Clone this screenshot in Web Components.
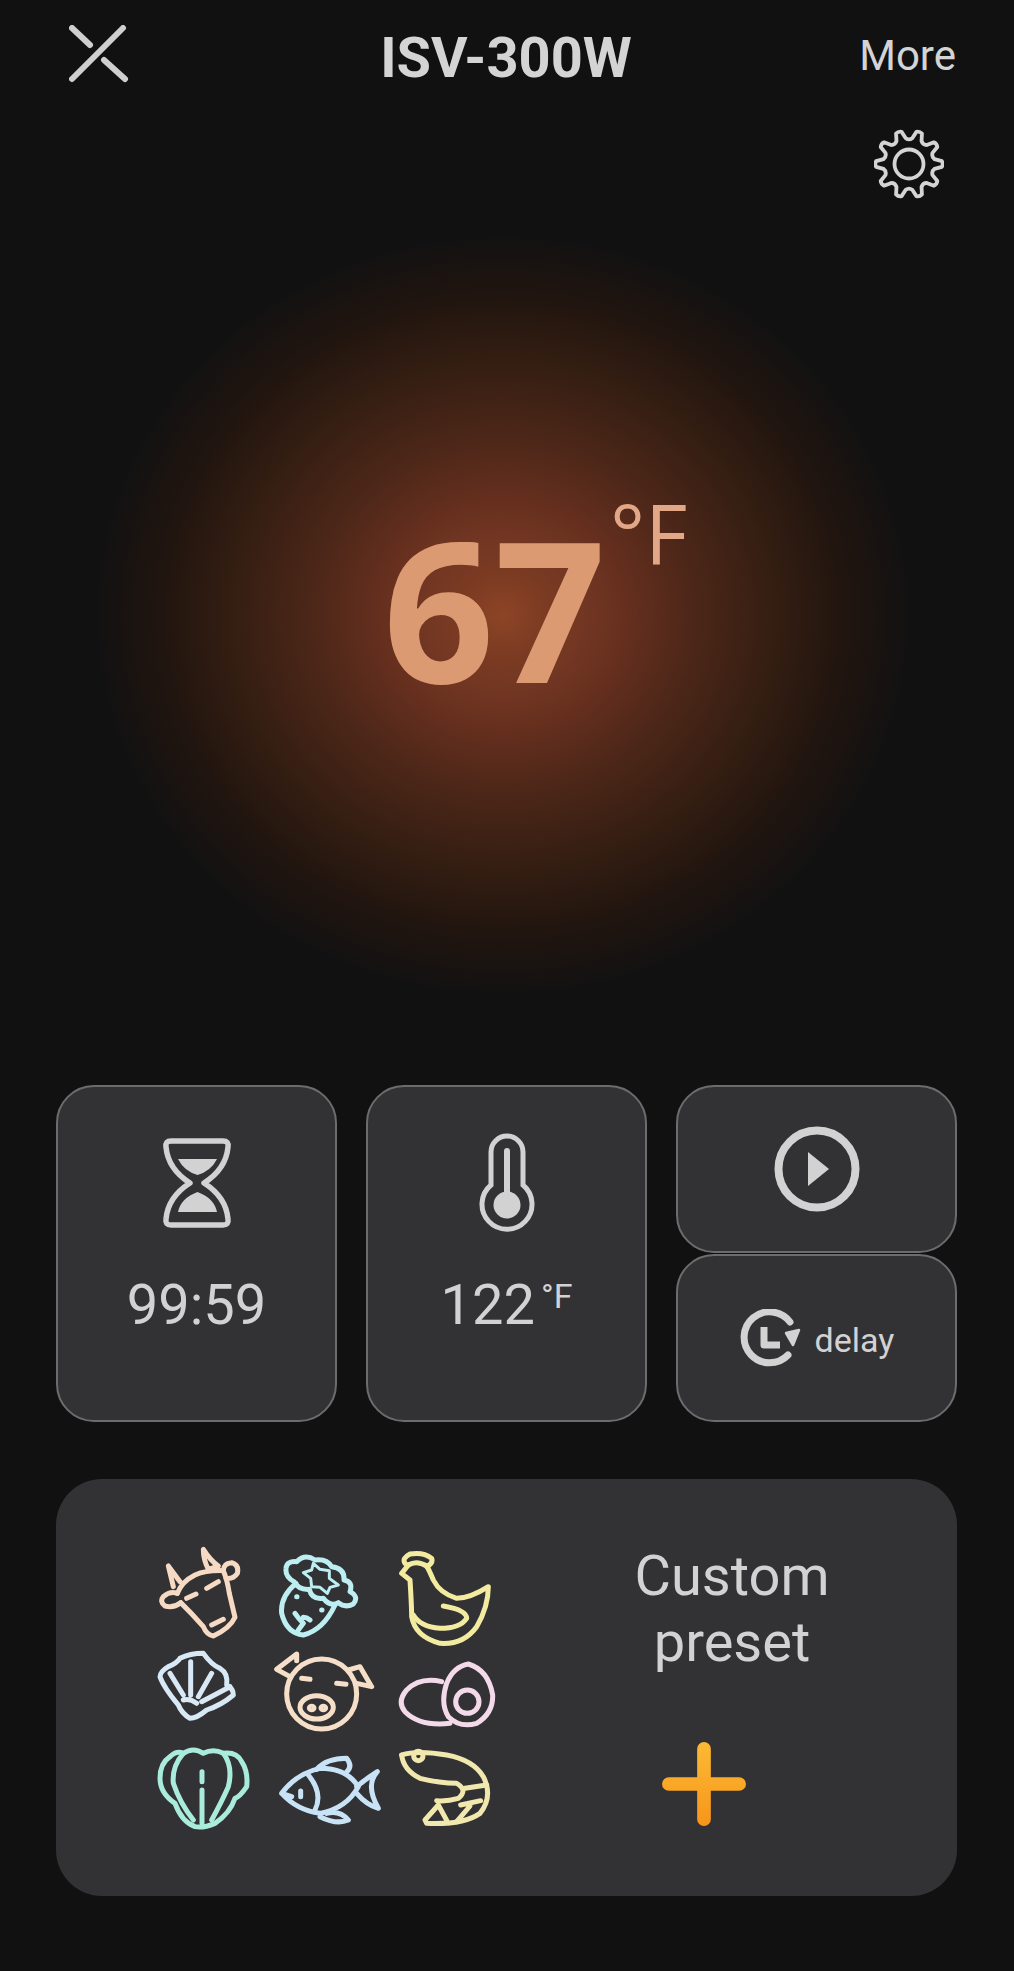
<!DOCTYPE html>
<html lang="en">
<head>
<meta charset="utf-8">
<title>ISV-300W</title>
<style>
  html, body { margin: 0; background: #111112; }
  body { width: 1014px; height: 1971px; overflow: hidden; font-family: Roboto, "Liberation Sans", sans-serif; color: #d2d2d2; }
</style>
</head>
<body>
<sv-app>
  <sv-header slot="header" title-text="ISV-300W" action="More"></sv-header>
  <sv-dial slot="dial" value="67" unit="°F"></sv-dial>
  <sv-controls slot="controls">
    <sv-card class="tall" label="99:59" icon="hourglass"></sv-card>
    <sv-card class="tall" label="122" unit="°F" icon="thermometer"></sv-card>
    <sv-card icon="play"></sv-card>
    <sv-card class="inline" label="delay" icon="delay"></sv-card>
  </sv-controls>
  <sv-presets slot="presets">
    <sv-food name="cow"></sv-food>
    <sv-food name="veg"></sv-food>
    <sv-food name="chicken"></sv-food>
    <sv-food name="shell"></sv-food>
    <sv-food name="pig"></sv-food>
    <sv-food name="egg"></sv-food>
    <sv-food name="cabbage"></sv-food>
    <sv-food name="fish"></sv-food>
    <sv-food name="shrimp"></sv-food>
    <span slot="label">Custom<br>preset</span>
  </sv-presets>
</sv-app>

<script>
/** Icons of the control cards, each one keeps the pixel size it has on the device */
const CARD_ICONS = Object.freeze({
  hourglass: `<svg width="72" height="100" viewBox="0 -5 72 100" fill="none" stroke="currentColor" stroke-width="5.5" stroke-linejoin="round">
      <path d="M10 3H62Q68 3 67 9Q65 31 43 45Q65 59 67 81Q68 87 62 87H10Q4 87 5 81Q7 59 29 45Q7 31 5 9Q4 3 10 3Z"/>
      <path d="M17 21H56Q50 33 36.500 37Q23 33 17 21Z" fill="currentColor" stroke="none"/>
      <path d="M36.500 54Q53 60 56 74H17Q20 60 36.500 54Z" fill="currentColor" stroke="none"/>
    </svg>`,
  thermometer: `<svg width="56" height="100" viewBox="0 0 56 100" fill="none" stroke="currentColor" stroke-width="5">
      <path d="M12 52V19A16 16 0 0 1 44 19V52A25 25 0 1 1 12 52Z"/>
      <path d="M28 18V62" stroke-width="6" stroke-linecap="round"/>
      <circle cx="28" cy="72" r="13.500" fill="currentColor" stroke="none"/>
    </svg>`,
  play: `<svg width="86" height="86" viewBox="0 0 86 86" fill="none" stroke="currentColor" stroke-width="8">
      <circle cx="43" cy="43" r="38.500"/>
      <path d="M34 26L55 43L34 60Z" fill="currentColor" stroke="none"/>
    </svg>`,
  delay: `<svg width="62" height="58" viewBox="0 0 62 58" fill="none" stroke="currentColor" stroke-width="7" stroke-linecap="round" stroke-linejoin="round">
      <path d="M49 46A25.500 25.500 0 1 1 51 13"/>
      <path d="M25 18V36H41" stroke-linecap="butt"/>
      <path d="M47 24L60 21L54 36Z" fill="currentColor" stroke-width="2.500"/>
    </svg>`
});

/** Food icons, paths are in a 3x grid (360x300 for a 120x100 cell), the viewBox moves them into the cell */
const FOOD_ICONS = Object.freeze({
  cow: { color: '#f6dac3', box: '30 51', body: `
    <path d="M120 155L85 108L100 170M190 58Q190 90 205 118L235 108Q210 90 190 58Z"/>
    <path d="M112 190Q125 155 165 135Q200 120 250 122Q262 150 268 190L285 262Q270 295 220 318Q200 315 190 290Q155 250 122 218"/>
    <path d="M122 218Q100 235 75 228Q58 215 70 200Q90 182 112 190M250 122Q250 100 275 98Q298 105 292 130Q280 148 258 145"/>
    <path d="M140 205L168 192M200 175L235 155M215 285L250 268"/>` },
  veg: { color: '#bdeef1', box: '0 51', body: `
    <path d="M72 155Q45 140 48 115Q50 92 80 95Q105 70 135 90Q170 85 185 110Q225 115 222 150Q250 155 240 185Q268 200 250 222Q225 235 205 218Q180 232 160 205Q125 210 118 178Q85 180 72 155Z"/>
    <path d="M100 128L125 120L130 100L150 118L178 122L178 145L205 165L180 172L172 190L150 172L125 170L122 145Z" stroke-width="9"/>
    <path d="M78 160Q30 200 35 250Q50 310 100 315Q160 300 195 225M75 250Q85 265 100 280L85 300M100 262Q110 262 120 270"/>
    <path d="M80 200h1M155 240h1"/>` },
  chicken: { color: '#f3eca0', box: '360 51', body: `
    <path d="M405 100Q395 85 420 72Q460 65 485 85Q490 100 470 110M415 105Q440 90 470 108"/>
    <path d="M415 105L395 130L420 150Q425 230 425 260Q435 320 510 340Q580 345 620 290Q655 230 655 170Q600 205 560 205Q510 190 490 150Q475 115 470 108"/>
    <path d="M520 228Q590 240 590 265Q570 295 510 295Q450 290 430 255"/>` },
  shell: { color: '#d9e8f5', box: '30 21', body: `
    <path d="M60 110Q60 95 85 80Q110 70 120 55Q150 40 190 40Q215 75 240 85Q265 100 260 135Q280 145 280 165Q245 195 200 210Q170 235 150 235Q125 220 115 195Q70 140 60 110Z"/>
    <path d="M90 100L130 165M152 65V165M215 100L175 170M270 140L185 185M130 180Q150 175 170 190"/>` },
  pig: { color: '#f6dfc8', box: '390 21', body: `
    <circle cx="545" cy="162" r="105"/>
    <path d="M470 62L470 42L410 88L450 110M625 90L660 80L695 140L650 130"/>
    <path d="M485 115L510 118M590 130L618 133"/>
    <ellipse cx="530" cy="202" rx="50" ry="35"/>
    <ellipse cx="515" cy="204" rx="7" ry="5"/><ellipse cx="550" cy="204" rx="7" ry="5"/>` },
  egg: { color: '#f3d9e9', box: '750 21', body: `
    <path d="M905 125Q840 110 800 150Q770 185 795 215Q840 260 930 250"/>
    <path d="M985 72Q940 80 920 130Q900 190 925 230Q960 265 1010 250Q1060 220 1058 165Q1045 90 985 72Z"/>
    <circle cx="982" cy="185" r="35"/>` },
  cabbage: { color: '#a9ecdc', box: '30 51', body: `
    <path d="M130 70Q160 50 190 70Q220 55 250 70Q290 65 305 95Q325 125 320 170Q300 200 285 205Q270 250 225 280Q190 295 165 290Q125 275 105 220Q60 190 60 145Q60 100 90 80Q110 60 130 70Z"/>
    <path d="M130 70Q95 110 100 160Q120 220 160 270M250 70Q280 110 265 170Q245 215 215 270"/>
    <path d="M186 125V155M186 180V280"/>` },
  fish: { color: '#c9e3f6', box: '390 51', body: `
    <path d="M425 190Q470 130 540 115Q620 115 655 170Q620 235 540 250Q470 240 425 190ZM425 190L455 200"/>
    <path d="M650 170Q680 145 712 125Q675 165 715 235Q680 225 650 190"/>
    <path d="M530 118Q560 85 620 85Q640 110 618 128M560 250Q600 240 625 270Q590 285 540 260"/>
    <path d="M505 135Q550 190 525 240M482 183V200"/>` },
  shrimp: { color: '#f1e8ae', box: '750 51', body: `
    <path d="M785 75Q830 60 920 75Q1000 90 1030 140Q1060 200 1020 250Q970 285 860 280L855 270L895 225L925 280"/>
    <path d="M785 75Q790 120 840 145Q900 160 950 160Q985 180 955 205Q920 215 890 212"/>
    <path d="M975 175L1040 165M962 225L1022 212M950 275L990 228"/>
    <circle cx="835" cy="78" r="14"/>` }
});

/** Builds the gear outline, 10 teeth around the centre of a 70x70 box with a gap at the top */
const gearPath = () => {
  const TEETH = 10;
  const step = Math.PI * 2 / TEETH;
  const point = (radius, angle) =>
    `${(35 + radius * Math.cos(angle)).toFixed(2)} ${(35 + radius * Math.sin(angle)).toFixed(2)}`;

  let d = '';
  for (let i = 0; i < TEETH; i++) {
    const angle = i * step - Math.PI / 2 + step / 2;
    d += `${i ? 'Q' : 'M'}${i ? `${point(23.5, angle - step / 2)} ` : ''}${point(26, angle - step * 0.3)}`;
    d += `L${point(33, angle - step * 0.14)}`;
    d += `Q${point(34.5, angle)} ${point(33, angle + step * 0.14)}`;
    d += `L${point(26, angle + step * 0.3)}`;
  }
  return `${d}Q${point(23.5, -Math.PI / 2)} ${point(26, -Math.PI / 2 + step * 0.2)}Z`;
};

/** Base for all elements here, only attaches the shadow root and fills it in */
class ShadowElement extends HTMLElement {
  connectedCallback() {
    if (this.shadowRoot) return;
    this.attachShadow({mode: 'open'}).innerHTML = this.markup();
  }
}

class SvApp extends ShadowElement {
  markup() {
    return `
      <style>
        :host { display: flex; flex-direction: column; width: 1014px; }
      </style>
      <slot name="header"></slot>
      <slot name="dial"></slot>
      <slot name="controls"></slot>
      <slot name="presets"></slot>
    `;
  }
}

class SvHeader extends ShadowElement {
  markup() {
    return `
      <style>
        :host { display: block; height: 200px; padding: 0 58px 0 56px; }
        .row { display: grid; grid-template-columns: 1fr auto 1fr; align-items: start; padding-top: 25px; }
        .close { margin-left: 13px; display: block; }
        h1 { margin: 3px 0 -3px; font: 700 56px/60px Roboto, sans-serif; color: #d4d4d4; }
        .more { justify-self: end; font: 400 42px/60px Roboto, sans-serif; color: #d4d4d4; margin-top: 1px; }
        .gear { display: flex; justify-content: flex-end; padding: 43px 12px 0 0; }
      </style>
      <div class="row">
        <svg class="close" width="60" height="58" viewBox="0 0 60 58" fill="none" stroke="#cfcfcf" stroke-width="6" stroke-linecap="round">
          <path d="M54 3L3 54M3 3L21 20M35 35L56 54"/>
        </svg>
        <h1>${this.getAttribute('title-text')}</h1>
        <span class="more">${this.getAttribute('action')}</span>
      </div>
      <div class="gear">
        <svg width="70" height="70" viewBox="0 0 70 70" fill="none" stroke="#d4d4d4" stroke-width="3.800" stroke-linejoin="round">
          <path d="${gearPath()}"/>
          <circle cx="35" cy="35" r="14.500"/>
        </svg>
      </div>
    `;
  }
}

class SvDial extends ShadowElement {
  markup() {
    return `
      <style>
        :host {
          display: flex; justify-content: flex-start; align-items: flex-start;
          height: 885px; box-sizing: border-box; padding: 288px 0 0 383px;
          background: radial-gradient(ellipse 420px 392px at 503px 415px,
            #8d4426 0%, #7c3b22 10%, #6f3522 22%, #662f1e 29%, #4a2618 47%, #351e12 64%, #21150f 81%, #111112 98%);
          color: #dc9a73;
        }
        .value { font: 700 195px/240px "Open Sans", sans-serif; }
        .unit { font: 400 82px/100px "Open Sans", sans-serif; color: #e2a786; margin: -6px 0 0 4px; }
      </style>
      <span class="value">${this.getAttribute('value')}</span>
      <span class="unit">${this.getAttribute('unit')}</span>
    `;
  }
}

class SvControls extends ShadowElement {
  markup() {
    return `
      <style>
        :host {
          display: grid; grid-template-columns: repeat(3, 281px); grid-template-rows: 168px 168px;
          grid-auto-flow: column dense; column-gap: 29px; row-gap: 1px;
          padding: 0 57px 0 56px; height: 337px;
        }
        ::slotted(.tall) { grid-row: span 2; }
      </style>
      <slot></slot>
    `;
  }
}

class SvCard extends ShadowElement {
  markup() {
    const label = this.getAttribute('label');
    const unit = this.getAttribute('unit');
    const isInline = this.classList.contains('inline');
    const isTall = this.classList.contains('tall');

    return `
      <style>
        :host {
          display: flex; box-sizing: border-box; background: #323235;
          border: 2px solid #6c6c6e; border-radius: 38px; color: #d2d2d2;
          flex-direction: ${isInline ? 'row' : 'column'};
          align-items: center; justify-content: ${isTall ? 'flex-start' : 'center'};
          padding-top: ${isTall ? '46px' : '0'};
        }
        svg { display: block; flex: none; }
        .label { font: 400 56px/64px Roboto, sans-serif; display: flex; align-items: flex-start; margin-top: 40px; }
        .inline { font-size: 34px; line-height: 40px; margin: 3px 0 0 14px; }
        sup { font: 400 34px/40px Roboto, sans-serif; margin: 3px 0 0 6px; }
      </style>
      ${CARD_ICONS[this.getAttribute('icon')]}
      ${label ? `<span class="label ${isInline ? 'inline' : ''}">${label}${unit ? `<sup>${unit}</sup>` : ''}</span>` : ''}
    `;
  }
}

class SvPresets extends ShadowElement {
  markup() {
    return `
      <style>
        :host {
          display: flex; box-sizing: border-box; width: 901px; height: 417px;
          margin: 57px 0 0 56px; padding: 68px 0 0 94px;
          background: #323235; border-radius: 46px;
        }
        .foods { display: grid; grid-template-columns: repeat(3, 120px); grid-template-rows: repeat(3, 100px); flex: none; }
        .side { flex: 1; display: flex; flex-direction: column; }
        .label { font: 400 56px/66px Roboto, sans-serif; text-align: center; color: #d2d2d2; margin: -4px 3px 0 0; }
        svg { display: block; margin: 67px 0 0 152px; }
      </style>
      <div class="foods"><slot></slot></div>
      <div class="side">
        <div class="label"><slot name="label"></slot></div>
        <svg width="84" height="84" viewBox="0 0 86 86">
          <defs>
            <linearGradient id="plus" x1="0" y1="0" x2="0" y2="1">
              <stop offset="0" stop-color="#fdba34"/>
              <stop offset="1" stop-color="#f6951a"/>
            </linearGradient>
          </defs>
          <path d="M36 7a7 7 0 0 1 14 0V36H79a7 7 0 0 1 0 14H50V79a7 7 0 0 1-14 0V50H7a7 7 0 0 1 0-14H36Z" fill="url(#plus)"/>
        </svg>
      </div>
    `;
  }
}

class SvFood extends ShadowElement {
  markup() {
    const icon = FOOD_ICONS[this.getAttribute('name')];

    return `
      <style>
        :host { display: block; width: 120px; height: 100px; }
        svg { display: block; overflow: visible; filter: blur(0.4px); }
      </style>
      <svg width="120" height="100" viewBox="${icon.box} 360 300" fill="none" stroke="${icon.color}"
        stroke-width="15" stroke-linecap="round" stroke-linejoin="round">${icon.body}</svg>
    `;
  }
}

customElements.define('sv-app', SvApp);
customElements.define('sv-header', SvHeader);
customElements.define('sv-dial', SvDial);
customElements.define('sv-controls', SvControls);
customElements.define('sv-card', SvCard);
customElements.define('sv-presets', SvPresets);
customElements.define('sv-food', SvFood);
</script>
</body>
</html>
